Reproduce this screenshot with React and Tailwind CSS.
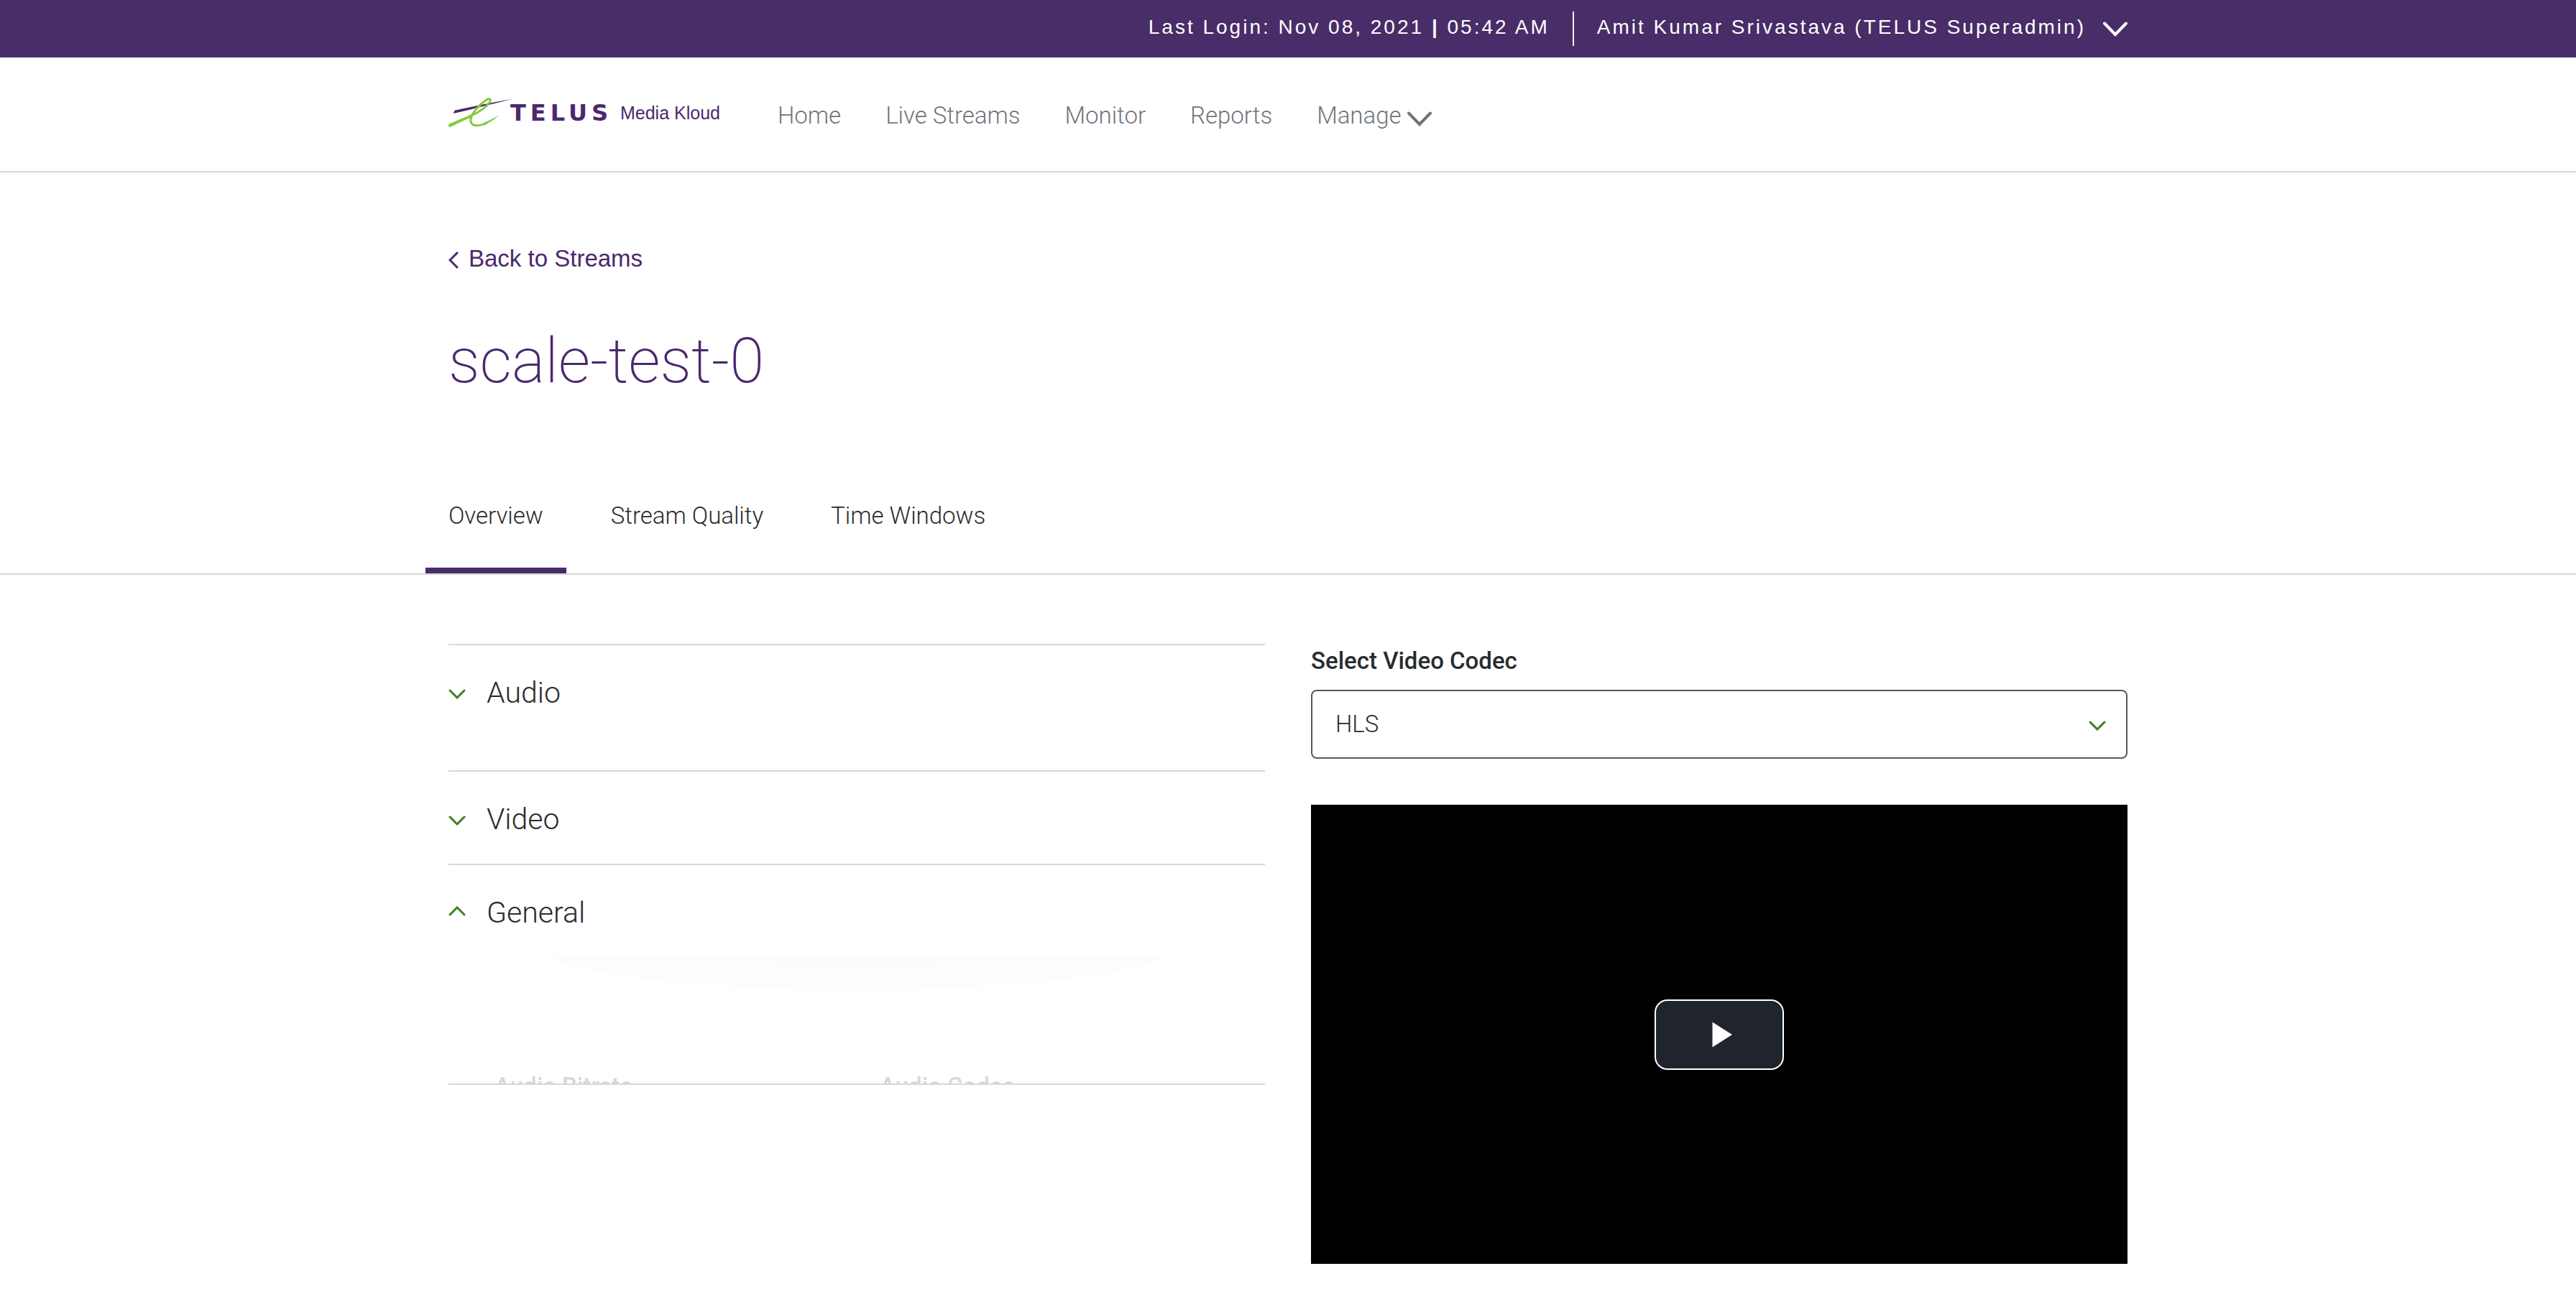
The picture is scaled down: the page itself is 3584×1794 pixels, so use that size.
import React, { useState } from 'react';

function Chevron({ className, direction = 'down' }) {
  const paths = {
    down: 'M2 2 L12 12 L22 2',
    up: 'M2 12 L12 2 L22 12',
  };
  return (
    <svg viewBox="0 0 24 14" fill="none" stroke="currentColor" strokeWidth="3" strokeLinecap="round" className={className} aria-hidden="true">
      <path d={paths[direction]} />
    </svg>
  );
}

function BoldChevron({ className }) {
  return (
    <svg viewBox="0 0 34 21" fill="none" stroke="currentColor" strokeWidth="4" strokeLinecap="round" className={className} aria-hidden="true">
      <path d="M2 2.5 L17 18 L32 2.5" />
    </svg>
  );
}

function Logo() {
  return (
    <a href="#home" className="flex shrink-0 items-center pb-1 whitespace-nowrap text-[#4b286d]">
      <svg viewBox="45 50 270 130" className="h-11 w-[90px]" aria-hidden="true">
        <path d="M70 105 C140 90 230 70 313 57 C240 74 150 98 66 118 Z" fill="#4b286d" />
        <path
          d="M134 130 C165 116 200 96 217 70 C224 57 214 53 203 61 C176 80 144 112 138 140 C135 158 144 168 163 168 C176 168 190 164 204 157"
          fill="none"
          stroke="#80cc3b"
          strokeWidth="9"
          strokeLinejoin="round"
        />
        <path d="M48 161 C78 149 108 136 142 121 L142 133 C112 145 80 161 54 174 C45 177 42 165 48 161 Z" fill="#80cc3b" />
        <path d="M192 156 C216 147 236 136 256 123 C240 141 218 154 196 166 Z" fill="#80cc3b" />
      </svg>
      <span className="-ml-1 font-['DejaVu_Sans'] text-[32px] leading-[40px] font-bold tracking-[6px]">TELUS</span>
      <span className="ml-[11px] font-['Liberation_Sans',sans-serif] text-[25px] leading-[40px]">Media Kloud</span>
    </a>
  );
}

function TopBar() {
  return (
    <div className="bg-[#482d68] text-white">
      <div className="mx-auto flex h-20 w-full max-w-[2336px] items-center justify-end gap-8 font-['Liberation_Sans',sans-serif] text-[28px] leading-[40px] tracking-[3px] whitespace-nowrap">
        <span className="pb-1">
          Last Login: Nov 08, 2021 <span className="font-bold">|</span> 05:42 AM
        </span>
        <span className="h-12 w-0.5 bg-white" />
        <button type="button" className="flex items-center gap-6">
          <span className="pb-1">Amit Kumar Srivastava (TELUS Superadmin)</span>
          <BoldChevron className="h-[21px] w-[34px]" />
        </button>
      </div>
    </div>
  );
}

const NAV = ['Home', 'Live Streams', 'Monitor', 'Reports'];

function Header() {
  return (
    <header className="border-b-2 border-[#d8d8d8]">
      <div className="mx-auto flex h-[158px] w-full max-w-[2336px] items-center gap-20">
        <Logo />
        <nav className="flex items-center gap-[62px] pt-1 text-[33px] leading-[48px] font-light whitespace-nowrap text-[#71757b]">
          {NAV.map((item) => (
            <a key={item} href={'#' + item.toLowerCase().replace(' ', '-')}>
              {item}
            </a>
          ))}
          <button type="button" className="flex items-center gap-2">
            Manage
            <BoldChevron className="mt-2 h-[21px] w-[34px]" />
          </button>
        </nav>
      </div>
    </header>
  );
}

const TABS = ['Overview', 'Stream Quality', 'Time Windows'];

function Tabs() {
  const [active, setActive] = useState('Overview');
  return (
    <div className="border-b-2 border-[#d8d8d8]">
      <div className="mx-auto w-full max-w-[2336px]">
        <div role="tablist" className="-ml-8 flex gap-[30px] text-[33px] leading-[48px] font-light">
          {TABS.map((tab) => (
            <button
              key={tab}
              type="button"
              role="tab"
              aria-selected={active === tab}
              onClick={() => setActive(tab)}
              className={
                active === tab
                  ? 'border-b-8 border-[#482d68] px-8 py-12'
                  : 'border-b-8 border-transparent px-8 py-12'
              }
            >
              {tab}
            </button>
          ))}
        </div>
      </div>
    </div>
  );
}

function AccordionItem({ title, expanded, children }) {
  return (
    <section className="border-t-2 border-[#d8d8d8]">
      <button type="button" aria-expanded={expanded} className="flex w-full items-center gap-[29px] pt-9 pb-8 text-left text-[41px] leading-[60px] font-light">
        <Chevron
          direction={expanded ? 'up' : 'down'}
          className={expanded ? 'mb-1 h-[14px] w-6 text-[#3f7f22]' : 'mt-1 h-[14px] w-6 text-[#3f7f22]'}
        />
        {title}
      </button>
      {children}
    </section>
  );
}

function GeneralPanel() {
  return (
    <div className="relative h-44 overflow-hidden">
      <svg viewBox="0 0 1136 60" preserveAspectRatio="none" className="absolute inset-x-0 top-0 h-[60px] w-full" aria-hidden="true">
        <ellipse cx="568" cy="-14" rx="440" ry="60" fill="#fdfdfd" />
        <ellipse cx="568" cy="-20" rx="200" ry="38" fill="#fcfcfc" />
      </svg>
      <dl className="grid grid-cols-2 px-8 pt-[156px] text-[33px] leading-[48px] font-medium text-[#d8d8d8]">
        <dt className="pl-8">Audio Bitrate</dt>
        <dt className="pl-8">Audio Codec</dt>
      </dl>
    </div>
  );
}

function Player() {
  return (
    <div className="flex aspect-video w-full items-center justify-center bg-black">
      <button type="button" aria-label="Play video" className="flex h-[98px] w-[180px] items-center justify-center rounded-[18px] border-2 border-white bg-[#20252d] pl-2 text-white">
        <svg viewBox="0 0 28 36" className="h-9 w-7" fill="currentColor" aria-hidden="true">
          <path d="M0.5 0.5 L28 18 L0.5 35.5 Z" />
        </svg>
      </button>
    </div>
  );
}

export default function App() {
  return (
    <div className="min-h-screen bg-white font-[Roboto,'Liberation_Sans',sans-serif] text-[#2a2c2e]">
      <TopBar />
      <Header />
      <main>
        <div className="mx-auto w-full max-w-[2336px] pt-24 pb-[92px] text-[#4b286d]">
          <a href="#streams" className="inline-flex items-center gap-[14px] align-top font-['Liberation_Sans',sans-serif] text-[33px] leading-[48px]">
            <svg viewBox="0 0 14 24" className="mt-1 h-6 w-[14px]" fill="none" stroke="currentColor" strokeWidth="3" strokeLinecap="round" aria-hidden="true">
              <path d="M12 2 L2 12 L12 22" />
            </svg>
            Back to Streams
          </a>
          <h1 className="mt-[66px] text-[87px] leading-[104px] font-extralight">scale-test-0</h1>
        </div>
        <Tabs />
        <div className="mx-auto grid w-full max-w-[2336px] grid-cols-2 items-start gap-16 pt-24">
          <div className="border-b-2 border-[#d8d8d8]">
            <AccordionItem title="Audio" expanded={false}>
              <div className="h-[46px]" />
            </AccordionItem>
            <AccordionItem title="Video" expanded={false} />
            <AccordionItem title="General" expanded>
              <GeneralPanel />
            </AccordionItem>
          </div>
          <div>
            <label htmlFor="codec" className="mb-4 block text-[33px] leading-[48px] font-medium">
              Select Video Codec
            </label>
            <div className="relative mb-16">
              <select id="codec" defaultValue="HLS" className="h-24 w-full appearance-none rounded-lg border-2 border-[#54595f] bg-white px-8 text-[33px] leading-[48px] font-light">
                <option>HLS</option>
                <option>DASH</option>
              </select>
              <Chevron className="pointer-events-none absolute top-[43px] right-[30px] h-[14px] w-6 text-[#3f7f22]" />
            </div>
            <Player />
          </div>
        </div>
      </main>
    </div>
  );
}
